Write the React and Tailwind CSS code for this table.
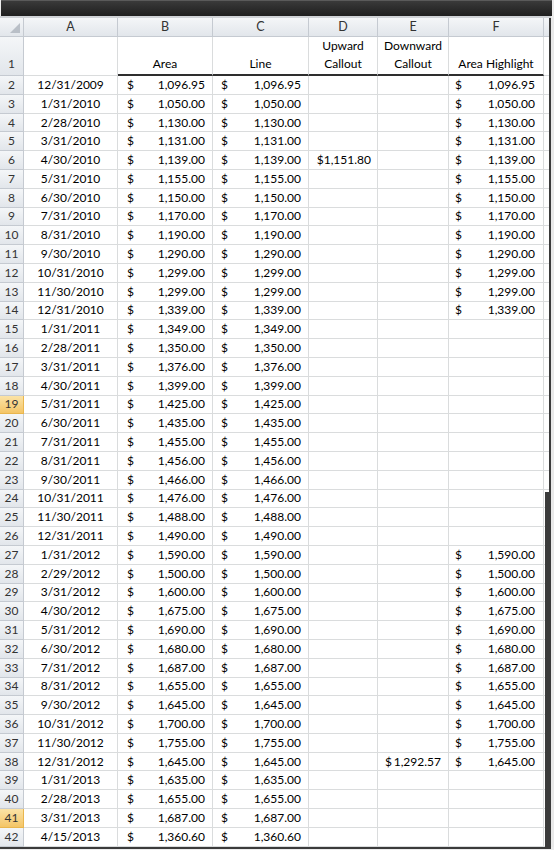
import React from 'react';

const rows = [
  ['12/31/2009', '1,096.95', '', '', '1,096.95'],
  ['1/31/2010', '1,050.00', '', '', '1,050.00'],
  ['2/28/2010', '1,130.00', '', '', '1,130.00'],
  ['3/31/2010', '1,131.00', '', '', '1,131.00'],
  ['4/30/2010', '1,139.00', '$1,151.80', '', '1,139.00'],
  ['5/31/2010', '1,155.00', '', '', '1,155.00'],
  ['6/30/2010', '1,150.00', '', '', '1,150.00'],
  ['7/31/2010', '1,170.00', '', '', '1,170.00'],
  ['8/31/2010', '1,190.00', '', '', '1,190.00'],
  ['9/30/2010', '1,290.00', '', '', '1,290.00'],
  ['10/31/2010', '1,299.00', '', '', '1,299.00'],
  ['11/30/2010', '1,299.00', '', '', '1,299.00'],
  ['12/31/2010', '1,339.00', '', '', '1,339.00'],
  ['1/31/2011', '1,349.00', '', '', ''],
  ['2/28/2011', '1,350.00', '', '', ''],
  ['3/31/2011', '1,376.00', '', '', ''],
  ['4/30/2011', '1,399.00', '', '', ''],
  ['5/31/2011', '1,425.00', '', '', ''],
  ['6/30/2011', '1,435.00', '', '', ''],
  ['7/31/2011', '1,455.00', '', '', ''],
  ['8/31/2011', '1,456.00', '', '', ''],
  ['9/30/2011', '1,466.00', '', '', ''],
  ['10/31/2011', '1,476.00', '', '', ''],
  ['11/30/2011', '1,488.00', '', '', ''],
  ['12/31/2011', '1,490.00', '', '', ''],
  ['1/31/2012', '1,590.00', '', '', '1,590.00'],
  ['2/29/2012', '1,500.00', '', '', '1,500.00'],
  ['3/31/2012', '1,600.00', '', '', '1,600.00'],
  ['4/30/2012', '1,675.00', '', '', '1,675.00'],
  ['5/31/2012', '1,690.00', '', '', '1,690.00'],
  ['6/30/2012', '1,680.00', '', '', '1,680.00'],
  ['7/31/2012', '1,687.00', '', '', '1,687.00'],
  ['8/31/2012', '1,655.00', '', '', '1,655.00'],
  ['9/30/2012', '1,645.00', '', '', '1,645.00'],
  ['10/31/2012', '1,700.00', '', '', '1,700.00'],
  ['11/30/2012', '1,755.00', '', '', '1,755.00'],
  ['12/31/2012', '1,645.00', '', '1,292.57', '1,645.00'],
  ['1/31/2013', '1,635.00', '', '', ''],
  ['2/28/2013', '1,655.00', '', '', ''],
  ['3/31/2013', '1,687.00', '', '', ''],
  ['4/15/2013', '1,360.60', '', '', ''],
];

const active = [19, 41];

const cell = 'box-border h-full border-r border-b border-[#dadcdd] shrink-0';
const hdr = 'box-border h-full border-r border-b border-[#c5cad1] bg-gradient-to-b from-[#f4f6f8] to-[#e2e6eb] text-[#333] flex items-center justify-center shrink-0';

function Money({ value, className }) {
  return (
    <div className={`${cell} flex items-center justify-between ${className}`}>
      {value && (
        <>
          <span>$</span>
          <span>{value}</span>
        </>
      )}
    </div>
  );
}

export default function App() {
  return (
    <div className="relative w-[554px] h-[850px] bg-[#ececec] overflow-hidden text-[12px] text-black" style={{ fontFamily: 'Lato, "Open Sans", sans-serif' }}>
      {/* window title bar */}
      <div className="h-[16px] ml-[1px] mr-[2px] bg-gradient-to-b from-[#3a3a3a] to-[#1f1f1f] border-t border-[#5a5a5a]" />
      <div className="h-[2px] bg-[#cfd2d6] mr-[3px]" />

      <div className="flex">
        <div className="w-[549px] bg-white">
          {/* column letters */}
          <div className="flex h-[19px] text-[12.5px]">
            <div className={`${hdr} w-[24px] relative`}>
              <div className="absolute right-[3px] bottom-[3px] w-0 h-0 border-l-[10px] border-l-transparent border-b-[10px] border-b-[#b9bfc7]" />
            </div>
            <div className={`${hdr} w-[94px]`}>A</div>
            <div className={`${hdr} w-[95px]`}>B</div>
            <div className={`${hdr} w-[96px]`}>C</div>
            <div className={`${hdr} w-[69px]`}>D</div>
            <div className={`${hdr} w-[71px]`}>E</div>
            <div className={`${hdr} w-[95px]`}>F</div>
            <div className={`${hdr} flex-1 border-r-0`} />
          </div>

          {/* row 1: titles */}
          <div className="flex h-[39px] leading-[18px]">
            <div className={`${hdr} w-[24px] items-end pb-[2px]`}>1</div>
            <div className={`${cell} w-[94px]`} />
            <div className={`${cell} w-[95px] border-b-2 border-b-[#2e2e2e] flex items-end justify-center pb-[1px]`}>Area</div>
            <div className={`${cell} w-[96px] border-b-2 border-b-[#2e2e2e] flex items-end justify-center pb-[1px]`}>Line</div>
            <div className={`${cell} w-[69px] border-b-2 border-b-[#2e2e2e] flex flex-col items-center justify-end pb-[1px]`}>
              <span>Upward</span>
              <span>Callout</span>
            </div>
            <div className={`${cell} w-[71px] border-b-2 border-b-[#2e2e2e] flex flex-col items-center justify-end pb-[1px]`}>
              <span>Downward</span>
              <span>Callout</span>
            </div>
            <div className={`${cell} w-[95px] border-b-2 border-b-[#2e2e2e] flex items-end justify-center pb-[1px]`}>Area Highlight</div>
            <div className={`${cell} flex-1 border-r-0`} />
          </div>

          {/* data rows */}
          {rows.map((r, i) => {
            const n = i + 2;
            const isActive = active.includes(n);
            return (
              <div key={n} className="flex h-[18.8px]">
                <div
                  className={
                    isActive
                      ? 'box-border h-full w-[24px] shrink-0 border-r border-b border-[#e9b64e] bg-gradient-to-b from-[#fbe3a6] to-[#f4c566] text-[#333] flex items-center justify-center'
                      : `${hdr} w-[24px]`
                  }
                >
                  {n}
                </div>
                <div className={`${cell} w-[94px] flex items-center justify-center`}>{r[0]}</div>
                <Money value={r[1]} className="w-[95px] pl-[9px] pr-[7px]" />
                <Money value={r[1]} className="w-[96px] pl-[8px] pr-[7px]" />
                <div className={`${cell} w-[69px] flex items-center justify-end pr-[6px]`}>{r[2]}</div>
                <Money value={r[3]} className="w-[71px] pl-[7px] pr-[7px]" />
                <Money value={r[4]} className="w-[95px] pl-[6px] pr-[8px]" />
                <div className={`${cell} flex-1 border-r-0`} />
              </div>
            );
          })}
        </div>

        {/* right window edge */}
        <div className="w-[2px] bg-[#3b3b3b]" />
        <div className="w-[3px] bg-[#e9e9e9]" />
      </div>

      {/* bottom window edge */}
      <div className="h-[2px] w-[551px] bg-[#3b3b3b]" />

      {/* shadow bar overlapping the right edge */}
      <div className="absolute left-[545px] top-[492px] w-[4px] h-[356px] bg-[#3b3b3b]" />
    </div>
  );
}
